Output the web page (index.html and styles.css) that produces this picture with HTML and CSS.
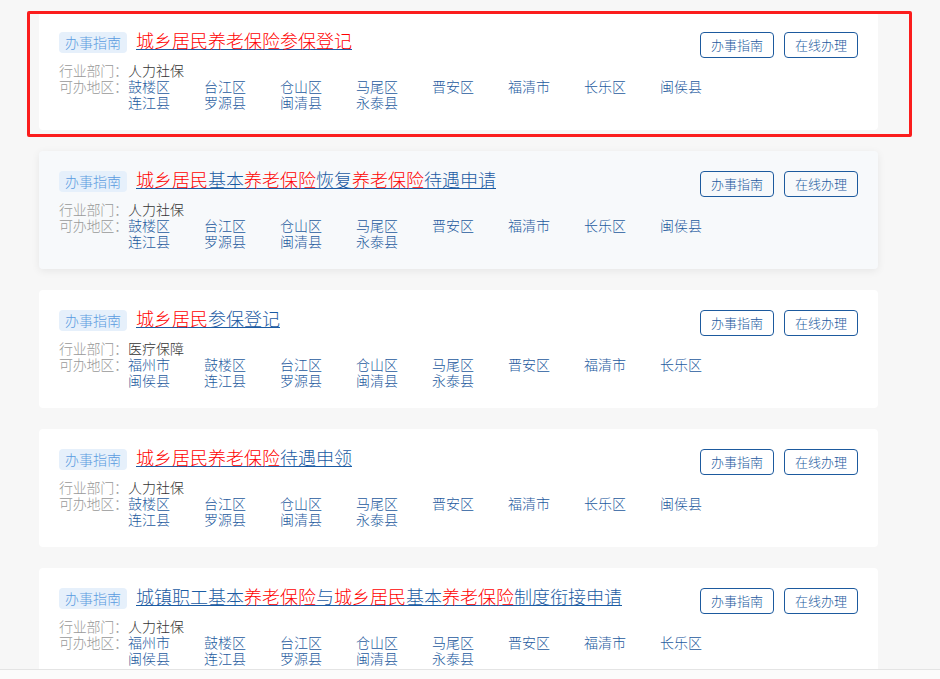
FILE: index.html
```html
<!DOCTYPE html>
<html lang="zh-CN">
<head>
    <meta charset="UTF-8">
    <meta name="viewport" content="width=device-width, initial-scale=1.0">
    <title>办事指南列表</title>
    <link rel="stylesheet" href="styles.css">
</head>
<body>

    <div class="list">

        <div class="item">
            <div class="marked"></div>
            <div class="item-head">
                <span class="tag">办事指南</span>
                <a class="title" href="#"><em>城乡居民养老保险参保登记</em></a>
                <div class="actions">
                    <a class="btn" href="#">办事指南</a>
                    <a class="btn" href="#">在线办理</a>
                </div>
            </div>
            <div class="row">
                <span class="label">行业部门：</span>
                <span class="value">人力社保</span>
            </div>
            <div class="row">
                <span class="label">可办地区：</span>
                <div class="areas">
                    <a href="#">鼓楼区</a><a href="#">台江区</a><a href="#">仓山区</a><a href="#">马尾区</a>
                    <a href="#">晋安区</a><a href="#">福清市</a><a href="#">长乐区</a><a href="#">闽侯县</a>
                    <a href="#">连江县</a><a href="#">罗源县</a><a href="#">闽清县</a><a href="#">永泰县</a>
                </div>
            </div>
        </div>

        <div class="item hover">
            <div class="item-head">
                <span class="tag">办事指南</span>
                <a class="title" href="#"><em>城乡居民</em>基本<em>养老保险</em>恢复<em>养老保险</em>待遇申请</a>
                <div class="actions">
                    <a class="btn" href="#">办事指南</a>
                    <a class="btn" href="#">在线办理</a>
                </div>
            </div>
            <div class="row">
                <span class="label">行业部门：</span>
                <span class="value">人力社保</span>
            </div>
            <div class="row">
                <span class="label">可办地区：</span>
                <div class="areas">
                    <a href="#">鼓楼区</a><a href="#">台江区</a><a href="#">仓山区</a><a href="#">马尾区</a>
                    <a href="#">晋安区</a><a href="#">福清市</a><a href="#">长乐区</a><a href="#">闽侯县</a>
                    <a href="#">连江县</a><a href="#">罗源县</a><a href="#">闽清县</a><a href="#">永泰县</a>
                </div>
            </div>
        </div>

        <div class="item">
            <div class="item-head">
                <span class="tag">办事指南</span>
                <a class="title" href="#"><em>城乡居民</em>参保登记</a>
                <div class="actions">
                    <a class="btn" href="#">办事指南</a>
                    <a class="btn" href="#">在线办理</a>
                </div>
            </div>
            <div class="row">
                <span class="label">行业部门：</span>
                <span class="value">医疗保障</span>
            </div>
            <div class="row">
                <span class="label">可办地区：</span>
                <div class="areas">
                    <a href="#">福州市</a><a href="#">鼓楼区</a><a href="#">台江区</a><a href="#">仓山区</a>
                    <a href="#">马尾区</a><a href="#">晋安区</a><a href="#">福清市</a><a href="#">长乐区</a>
                    <a href="#">闽侯县</a><a href="#">连江县</a><a href="#">罗源县</a><a href="#">闽清县</a>
                    <a href="#">永泰县</a>
                </div>
            </div>
        </div>

        <div class="item">
            <div class="item-head">
                <span class="tag">办事指南</span>
                <a class="title" href="#"><em>城乡居民养老保险</em>待遇申领</a>
                <div class="actions">
                    <a class="btn" href="#">办事指南</a>
                    <a class="btn" href="#">在线办理</a>
                </div>
            </div>
            <div class="row">
                <span class="label">行业部门：</span>
                <span class="value">人力社保</span>
            </div>
            <div class="row">
                <span class="label">可办地区：</span>
                <div class="areas">
                    <a href="#">鼓楼区</a><a href="#">台江区</a><a href="#">仓山区</a><a href="#">马尾区</a>
                    <a href="#">晋安区</a><a href="#">福清市</a><a href="#">长乐区</a><a href="#">闽侯县</a>
                    <a href="#">连江县</a><a href="#">罗源县</a><a href="#">闽清县</a><a href="#">永泰县</a>
                </div>
            </div>
        </div>

        <div class="item">
            <div class="item-head">
                <span class="tag">办事指南</span>
                <a class="title" href="#">城镇职工基本<em>养老保险</em>与<em>城乡居民</em>基本<em>养老保险</em>制度衔接申请</a>
                <div class="actions">
                    <a class="btn" href="#">办事指南</a>
                    <a class="btn" href="#">在线办理</a>
                </div>
            </div>
            <div class="row">
                <span class="label">行业部门：</span>
                <span class="value">人力社保</span>
            </div>
            <div class="row">
                <span class="label">可办地区：</span>
                <div class="areas">
                    <a href="#">福州市</a><a href="#">鼓楼区</a><a href="#">台江区</a><a href="#">仓山区</a>
                    <a href="#">马尾区</a><a href="#">晋安区</a><a href="#">福清市</a><a href="#">长乐区</a>
                    <a href="#">闽侯县</a><a href="#">连江县</a><a href="#">罗源县</a><a href="#">闽清县</a>
                    <a href="#">永泰县</a>
                </div>
            </div>
        </div>

    </div>

    <div class="bottom-bar"></div>

</body>
</html>
```

FILE: styles.css
```css
body {
    font-family: "Noto Sans CJK SC", "Noto Sans", sans-serif;
    font-size: 14px;
    font-weight: 300;
    line-height: 16px;
    margin: 0;
    padding: 12px 0 0;
    background-color: #f7f7f7;
    color: #333;
}

a {
    text-decoration: none;
}

.list {
    width: 839px;
    margin-left: 39px;
    display: flex;
    flex-direction: column;
    gap: 21px;
}

.item {
    position: relative;
    background-color: #fff;
    border-radius: 4px;
    padding: 20px;
    height: 118px;
    box-sizing: border-box;
}

.item.hover {
    background-color: #f7f9fb;
    box-shadow: 0 2px 8px rgba(0, 0, 0, 0.07);
}

/* red highlight frame around the first result */
.marked {
    position: absolute;
    left: -12px;
    top: -1px;
    right: -34px;
    bottom: -7px;
    border: 3px solid #fb1d1d;
    border-radius: 2px;
    pointer-events: none;
}

.item-head {
    display: flex;
    align-items: flex-start;
    height: 26px;
    margin-bottom: 4px;
}

.tag {
    display: inline-block;
    height: 21px;
    line-height: 21px;
    padding: 0 6px;
    border-radius: 4px;
    background-color: #e6f0fb;
    color: #5a9be0;
    font-size: 14px;
    margin-right: 9px;
}

.title {
    display: inline-block;
    font-size: 18px;
    line-height: 17px;
    color: #1b5ba3;
    border-bottom: 1px solid #1b5ba3;
}

.title em {
    font-style: normal;
    color: #ff0000;
}

.actions {
    margin-left: auto;
    display: flex;
    gap: 10px;
}

.btn {
    display: block;
    width: 74px;
    height: 26px;
    line-height: 24px;
    box-sizing: border-box;
    text-align: center;
    border: 1px solid #1d5a9e;
    border-radius: 4px;
    color: #1d5a9e;
    font-size: 13px;
}

.row {
    display: flex;
    align-items: flex-start;
}

.label {
    width: 69px;
    flex-shrink: 0;
    white-space: nowrap;
    letter-spacing: -0.25px;
    color: #999;
}

.value {
    color: #333;
}

.areas {
    width: 608px;
    display: flex;
    flex-wrap: wrap;
}

.areas a {
    width: 76px;
    color: #1d5a9e;
}

.bottom-bar {
    position: fixed;
    left: 0;
    right: 0;
    bottom: 0;
    height: 9px;
    background-color: #fbfbfb;
    border-top: 1px solid #e4e4e4;
}
```
